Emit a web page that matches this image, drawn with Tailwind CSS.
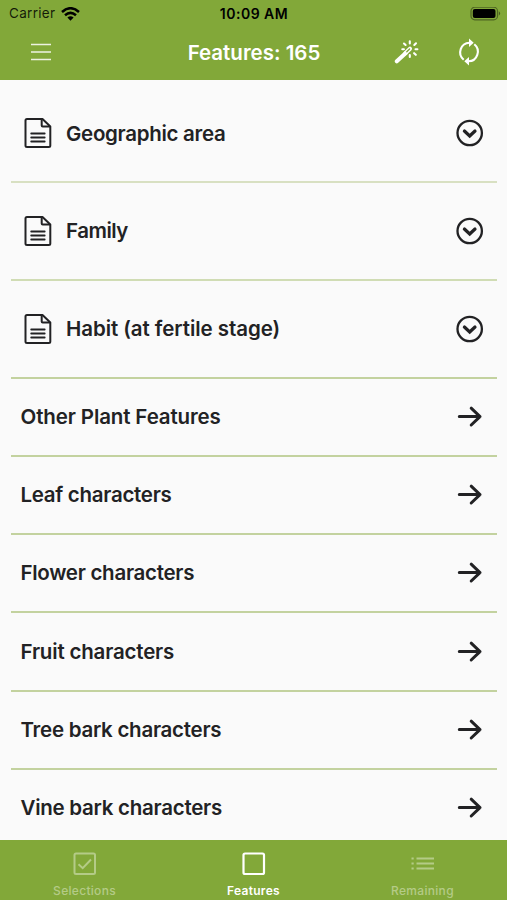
<!DOCTYPE html>
<html lang="en">
<head>
<meta charset="utf-8">
<meta name="viewport" content="width=device-width, initial-scale=1">
<title>Features</title>
<script src="https://cdn.jsdelivr.net/npm/@tailwindcss/browser@4"></script>
</head>
<body class="w-[507px] h-[900px] overflow-hidden bg-[#fafafa] font-['Inter','Liberation_Sans',sans-serif] flex flex-col text-[#222224]">
<svg class="hidden">
  <symbol id="doc" viewBox="0 0 28 32"><g fill="none" stroke="currentColor" stroke-width="2" stroke-linejoin="round" stroke-linecap="round"><path d="M3 2H18.500L26.300 9.500V28.500Q26.300 30 24.800 30H3Q1.500 30 1.500 28.500V3.500Q1.500 2 3 2Z"/><path d="M17.700 2.500V8.500Q17.700 9.500 18.700 9.500H25.500"/><path stroke-width="1.800" d="M7.200 16.500H20.700M7.200 20.500H20.700M7.200 24.500H20.700"/></g></symbol>
  <symbol id="down" viewBox="0 0 28 28"><g fill="none" stroke="currentColor"><circle cx="13.700" cy="14" r="12.200" stroke-width="2.300"/><path d="M8.400 12L13.700 17L19 12" stroke-width="3.200" stroke-linecap="round" stroke-linejoin="miter"/></g></symbol>
  <symbol id="arrow" viewBox="0 0 28 28"><path d="M3.300 13.600H24M15.200 5.200L24 13.600L15.200 22" fill="none" stroke="currentColor" stroke-width="3" stroke-linecap="round" stroke-linejoin="round"/></symbol>
</svg>

<header class="h-[79.500px] shrink-0 bg-[#82a839] flex flex-col">
  <div class="h-[27px] shrink-0 grid grid-cols-3 items-center text-black">
    <div class="flex items-center pl-[9px] gap-[6px]">
      <span class="text-[13.500px] leading-[27px] tracking-[0.300px] text-black/85">Carrier</span>
      <svg class="w-[19px] h-[14px]" viewBox="0 0 19 14"><g fill="none" stroke="#000" stroke-width="2.500"><path d="M1 5Q9.500 -2.600 18 5"/><path d="M4 8.300Q9.500 3.500 15 8.300"/></g><path d="M6.400 10.500Q9.500 8.200 12.600 10.500L9.500 13.700Z"/></svg>
    </div>
    <span class="text-center text-[14px] font-semibold leading-[27px] tracking-[0.500px] pl-[1px]">10:09 AM</span>
    <div class="flex justify-end pr-[6px]">
      <svg class="w-[31px] h-[14px]" viewBox="0 0 31 14"><rect x="1" y=".2" width="26.500" height="12.600" rx="3.800" fill="none" stroke="#000" stroke-opacity=".4" stroke-width="1.200"/><rect x="2.800" y="2" width="22.700" height="9" rx="2" /><path d="M28.800 4.300Q31.500 6.500 28.800 8.700Z" fill-opacity=".45"/></svg>
    </div>
  </div>
  <div class="h-[50px] grid grid-cols-3 items-center text-white">
    <svg class="w-[20px] h-[18px] ml-[31px]" viewBox="0 0 20 18"><path d="M0 1.500H20M0 9H20M0 16.500H20" stroke="#fff" stroke-opacity=".85" stroke-width="1.600"/></svg>
    <h1 class="text-center whitespace-nowrap text-[20.500px] font-semibold tracking-[0px] pt-[2px] pl-px">Features: 165</h1>
    <div class="flex items-center justify-end gap-[37px] pr-[26px]">
      <svg class="w-[26px] h-[26px]" viewBox="0 0 26 26" fill="none" stroke="#fff" stroke-linecap="round"><path d="M2.800 22.300L11.800 14" stroke-width="4"/><path d="M11.300 14.300L16 9.700" stroke-width="4"/><path d="M12.800 12.800L15.600 10" stroke="#82a839" stroke-width="1.300"/><path stroke-width="2.100" d="M15.800 2.300V4.400M10 4.500L11.600 6M22 4.300L20.300 6M21.500 10.300H23.400M20.100 14.200L21.800 15.800M15.800 16V18M8.300 10.300H9.900"/></svg>
      <svg class="w-[24px] h-[28px]" viewBox="0 0 24 28" fill="none" stroke="#fff" stroke-width="2.100"><path d="M6.700 21.700A9.600 9.600 0 0 1 12.500 4.700"/><path d="M17.300 6.300A9.600 9.600 0 0 1 11.500 23.300"/><path d="M12 .6L16.700 4.700L12 9ZM12 19L7.300 23.300L12 27.400Z" fill="#fff" stroke="none"/></svg>
    </div>
  </div>
</header>

<main class="flex-1 min-h-0 overflow-hidden px-[10.500px] pt-[6px] text-[20.500px] font-semibold">
  <div class="h-[97.800px] flex items-center border-b-2 border-[#d8e0c2] pl-[13.500px] pr-[13px]"><svg class="w-[28px] h-[32px]"><use href="#doc"/></svg><span class="ml-[14px] pt-px flex-1 tracking-[-0.300px]">Geographic area</span><svg class="w-[28px] h-[28px]"><use href="#down"/></svg></div>
  <div class="h-[97.800px] flex items-center border-b-2 border-[#d0dcb4] pl-[13.500px] pr-[13px]"><svg class="w-[28px] h-[32px]"><use href="#doc"/></svg><span class="ml-[14px] pt-px flex-1 tracking-[-0.500px]">Family</span><svg class="w-[28px] h-[28px]"><use href="#down"/></svg></div>
  <div class="h-[97.800px] flex items-center border-b-2 border-[#c3d29f] pl-[13.500px] pr-[13px]"><svg class="w-[28px] h-[32px]"><use href="#doc"/></svg><span class="ml-[14px] pt-px flex-1 tracking-[-0.060px]">Habit (at fertile stage)</span><svg class="w-[28px] h-[28px]"><use href="#down"/></svg></div>
  <div class="h-[78.200px] flex items-center justify-between border-b-2 border-[#c3d29f] pl-[10px] pr-[13px]"><span class="pt-px tracking-[-0.120px]">Other Plant Features</span><svg class="w-[28px] h-[28px]"><use href="#arrow"/></svg></div>
  <div class="h-[78.200px] flex items-center justify-between border-b-2 border-[#c3d29f] pl-[10px] pr-[13px]"><span class="pt-px tracking-[-0.290px]">Leaf characters</span><svg class="w-[28px] h-[28px]"><use href="#arrow"/></svg></div>
  <div class="h-[78.200px] flex items-center justify-between border-b-2 border-[#c3d29f] pl-[10px] pr-[13px]"><span class="pt-px tracking-[-0.280px]">Flower characters</span><svg class="w-[28px] h-[28px]"><use href="#arrow"/></svg></div>
  <div class="h-[78.200px] flex items-center justify-between border-b-2 border-[#c3d29f] pl-[10px] pr-[13px]"><span class="pt-px tracking-[-0.180px]">Fruit characters</span><svg class="w-[28px] h-[28px]"><use href="#arrow"/></svg></div>
  <div class="h-[78.200px] flex items-center justify-between border-b-2 border-[#c3d29f] pl-[10px] pr-[13px]"><span class="pt-px tracking-[-0.260px]">Tree bark characters</span><svg class="w-[28px] h-[28px]"><use href="#arrow"/></svg></div>
  <div class="h-[78.200px] flex items-center justify-between border-b-2 border-transparent pl-[10px] pr-[13px]"><span class="pt-px tracking-[-0.260px]">Vine bark characters</span><svg class="w-[28px] h-[28px]"><use href="#arrow"/></svg></div>
</main>

<nav class="h-[60px] shrink-0 bg-[#82a839] grid grid-cols-3 pt-[12px] text-[12px] font-medium leading-[16px] tracking-[0.300px]">
  <div class="flex flex-col items-center gap-[4px] text-[#b4cb87]"><svg class="w-[24px] h-[24px]" viewBox="0 0 24 24" fill="none" stroke="currentColor" stroke-width="2"><rect x="1.500" y="1.500" width="20.500" height="20.500" rx="1.500"/><path d="M5.500 12.300L9.700 16.200L18 7.500"/></svg><span class="pt-[3px]">Selections</span></div>
  <div class="flex flex-col items-center gap-[4px] text-white"><svg class="w-[24px] h-[24px]" viewBox="0 0 24 24" fill="none" stroke="currentColor" stroke-width="2.200"><rect x="1.500" y="1.500" width="20.500" height="20.500" rx="1.500"/></svg><span class="pt-[3px] font-semibold">Features</span></div>
  <div class="flex flex-col items-center gap-[4px] text-[#b4cb87]"><svg class="w-[24px] h-[24px]" viewBox="0 0 24 24" fill="none" stroke="currentColor" stroke-width="2"><path d="M.5 6.500H2.700M.5 11.500H2.700M.5 16.500H2.700M5.500 6.500H23M5.500 11.500H23M5.500 16.500H23"/></svg><span class="pt-[3px]">Remaining</span></div>
</nav>
</body>
</html>
